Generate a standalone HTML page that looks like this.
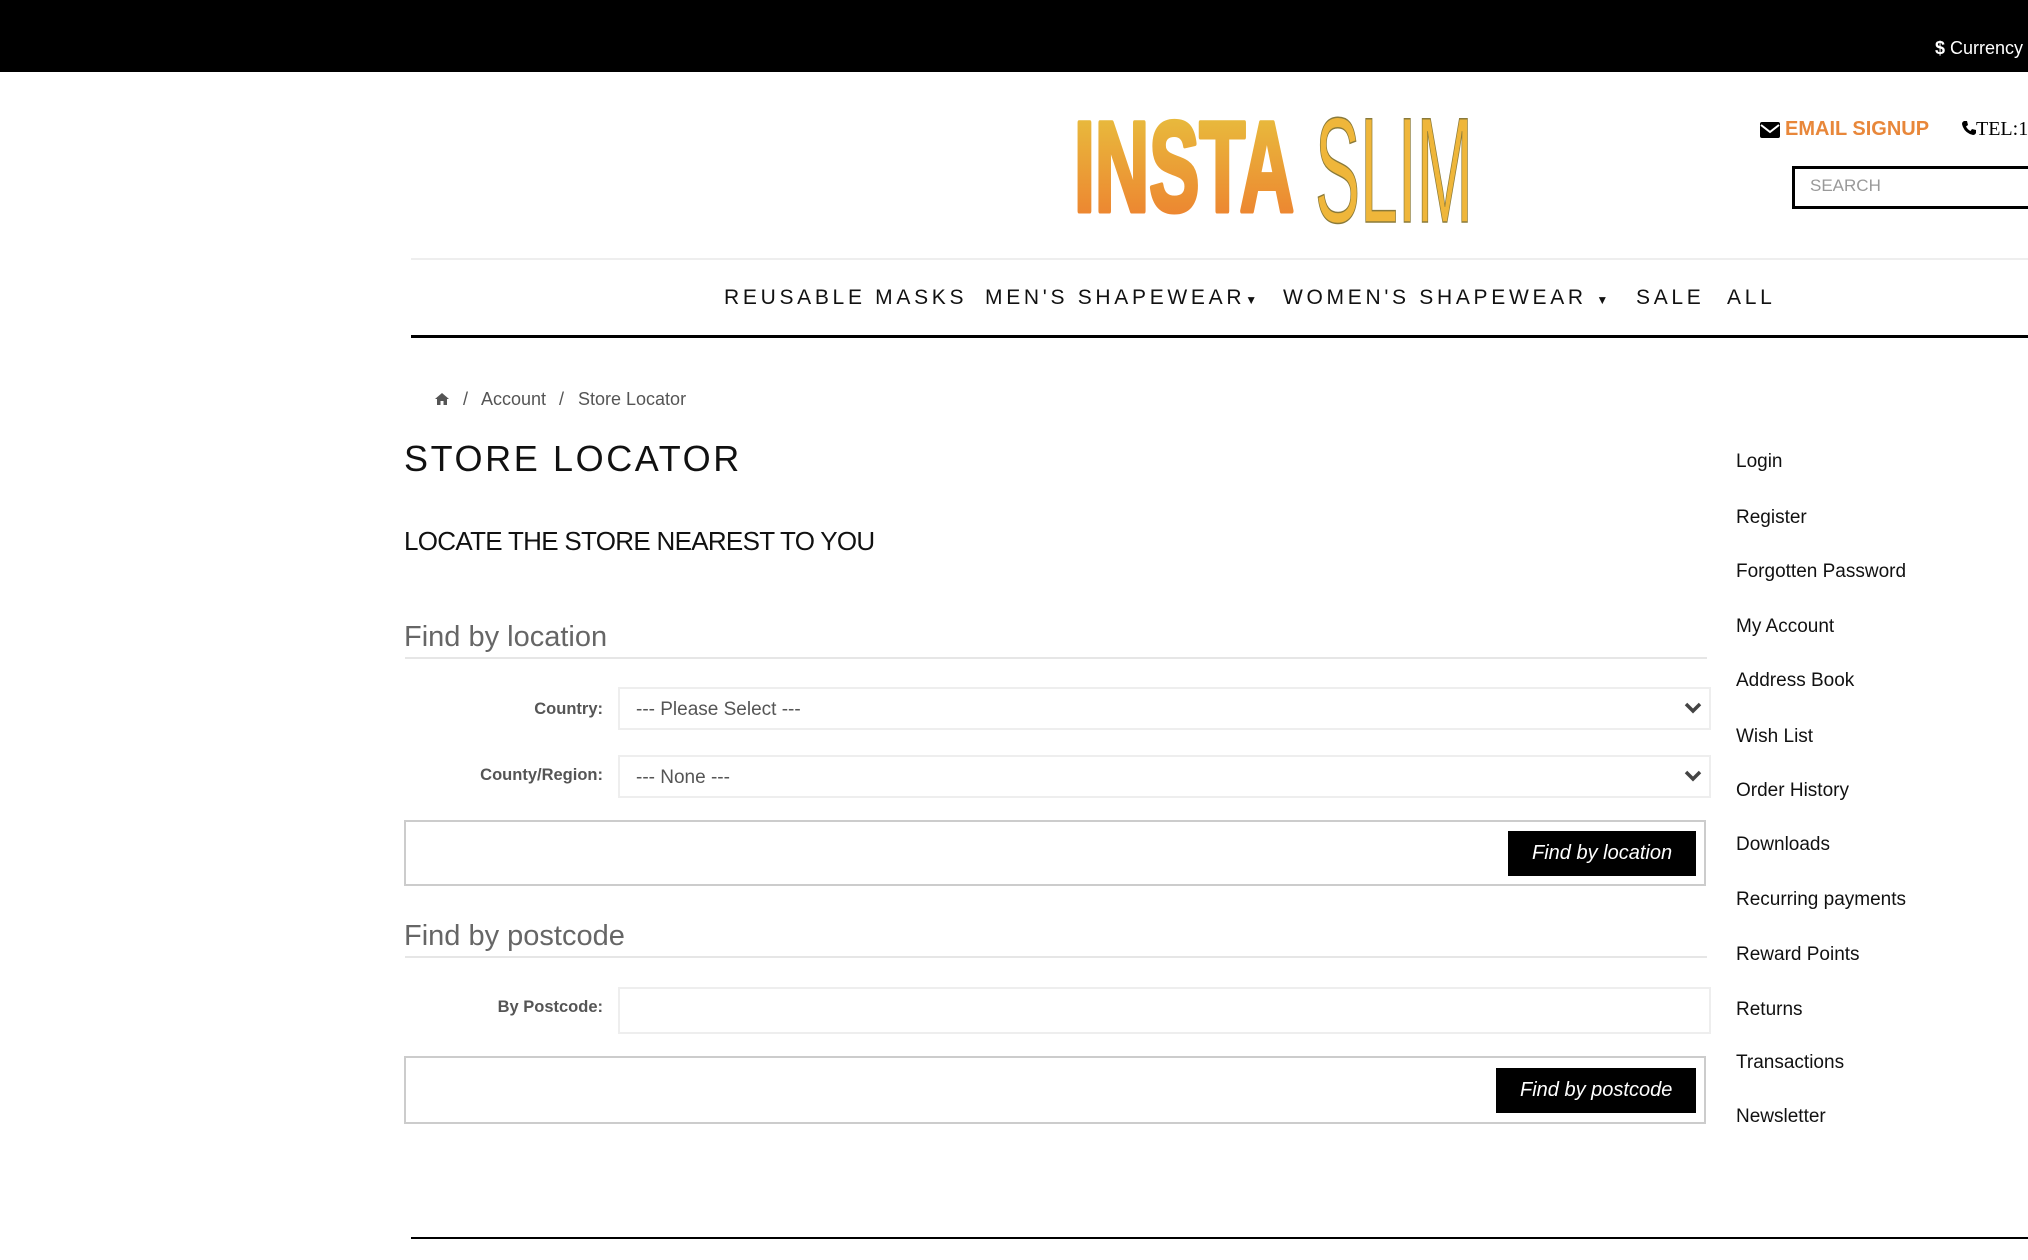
<!DOCTYPE html>
<html><head><meta charset="utf-8"><style>
*{margin:0;padding:0;box-sizing:border-box}
body{width:2028px;height:1260px;position:relative;background:#fff;font-family:"Liberation Sans",sans-serif;overflow:hidden;color:#111}
.a{position:absolute;white-space:nowrap}
.nav{top:286px;font-size:21px;letter-spacing:3.7px;color:#111}
.side{left:1736px;font-size:19px;color:#111}
.lbl{font-size:16.5px;font-weight:bold;color:#555;text-align:right;width:200px}
.sel{border:2px solid #eee;background:#fff;height:43px;font-size:19px;color:#555;padding:10px 16px}
.btnbox{border:2px solid #ccc;height:66px}
.btn{background:#000;color:#fff;font-style:italic;font-size:20px;padding:0 24px;height:45px;line-height:45px}
.hd{font-size:29px;color:#666}
.ln{height:2px;background:#e6e6e6}
</style></head><body>
<div class="a" style="left:0;top:0;width:2028px;height:72px;background:#000"></div>
<div class="a" style="left:1935px;top:38px;font-size:18px;color:#fff"><b>$</b> Currency</div>

<svg class="a" style="left:1068px;top:92px" width="420" height="140" viewBox="0 0 420 140">
<defs><linearGradient id="g" x1="0" y1="0" x2="0" y2="1"><stop offset="0" stop-color="#e7c53f"/><stop offset="1" stop-color="#ee7a2e"/></linearGradient></defs>
<text x="6" y="119" font-family="Liberation Sans Narrow, Liberation Sans, sans-serif" font-weight="bold" font-size="128" fill="url(#g)" stroke="url(#g)" stroke-width="5" stroke-linejoin="round" textLength="220" lengthAdjust="spacingAndGlyphs">INSTA</text>
<text x="247" y="130" font-family="Liberation Sans Narrow, Liberation Sans, sans-serif" font-size="150" fill="#efb63a" stroke="#8a7a3a" stroke-width="1.5" textLength="158" lengthAdjust="spacingAndGlyphs">SLIM</text>
</svg>

<svg class="a" style="left:1760px;top:122px" width="20" height="16" viewBox="0 0 20 16"><rect width="20" height="16" rx="2" fill="#000"/><path d="M1 3 L10 10 L19 3" stroke="#fff" stroke-width="2" fill="none"/></svg>
<div class="a" style="left:1785px;top:118px;font-size:20px;font-weight:bold;color:#e8873a">EMAIL SIGNUP</div>
<svg class="a" style="left:1961px;top:120px" width="16" height="16" viewBox="0 0 16 16"><path d="M3 1 L6 1 L7 5 L5 6.5 Q7 10 9.5 11 L11 9 L15 10 L15 13 Q14 15 12 15 Q3 13 1 4 Q1 2 3 1 Z" fill="#000"/></svg>
<div class="a" style="left:1976px;top:118px;font-size:20px;font-family:'Liberation Serif',serif;color:#000">TEL:1</div>
<div class="a" style="left:1792px;top:166px;width:260px;height:43px;border:3px solid #000"></div>
<div class="a" style="left:1810px;top:176px;font-size:17px;color:#999">SEARCH</div>

<div class="a" style="left:411px;top:258px;width:1617px;height:2px;background:#eee"></div>
<div class="a nav" style="left:724px">REUSABLE MASKS</div>
<div class="a nav" style="left:985px">MEN'S SHAPEWEAR<span style="font-size:12px;letter-spacing:0">&#9660;</span></div>
<div class="a nav" style="left:1283px">WOMEN'S SHAPEWEAR <span style="font-size:12px;letter-spacing:0">&#9660;</span></div>
<div class="a nav" style="left:1636px">SALE</div>
<div class="a nav" style="left:1727px">ALL</div>
<div class="a" style="left:411px;top:335px;width:1617px;height:3px;background:#000"></div>

<svg class="a" style="left:434px;top:392px" width="16" height="14" viewBox="0 0 16 14"><path d="M8 1 L1 7 L3 7 L3 13 L6.5 13 L6.5 9 L9.5 9 L9.5 13 L13 13 L13 7 L15 7 Z" fill="#555"/></svg>
<div class="a" style="left:463px;top:389px;font-size:18px;color:#555">/</div>
<div class="a" style="left:481px;top:389px;font-size:18px;color:#555">Account</div>
<div class="a" style="left:559px;top:389px;font-size:18px;color:#555">/</div>
<div class="a" style="left:578px;top:389px;font-size:18px;color:#555">Store Locator</div>

<div class="a" style="left:404px;top:438px;font-size:36px;letter-spacing:2.6px;color:#111">STORE LOCATOR</div>
<div class="a" style="left:404px;top:526px;font-size:26px;letter-spacing:-0.7px;color:#111">LOCATE THE STORE NEAREST TO YOU</div>

<div class="a hd" style="left:404px;top:621px">Find by location</div>
<div class="a ln" style="left:405px;top:657px;width:1302px"></div>
<div class="a lbl" style="left:403px;top:700px">Country:</div>
<div class="a sel" style="left:618px;top:687px;width:1093px">--- Please Select ---</div>
<div class="a lbl" style="left:403px;top:766px">County/Region:</div>
<div class="a sel" style="left:618px;top:755px;width:1093px">--- None ---</div>
<svg class="a" style="left:1684px;top:701px" width="18" height="14" viewBox="0 0 18 14"><path d="M2 3 L9 10 L16 3" stroke="#444" stroke-width="3.5" fill="none"/></svg>
<svg class="a" style="left:1684px;top:769px" width="18" height="14" viewBox="0 0 18 14"><path d="M2 3 L9 10 L16 3" stroke="#444" stroke-width="3.5" fill="none"/></svg>
<div class="a btnbox" style="left:404px;top:820px;width:1302px"></div>
<div class="a btn" style="left:1508px;top:831px">Find by location</div>

<div class="a hd" style="left:404px;top:920px">Find by postcode</div>
<div class="a ln" style="left:405px;top:956px;width:1302px"></div>
<div class="a lbl" style="left:403px;top:998px">By Postcode:</div>
<div class="a sel" style="left:618px;top:987px;width:1093px;height:47px"></div>
<div class="a btnbox" style="left:404px;top:1056px;width:1302px;height:68px"></div>
<div class="a btn" style="left:1496px;top:1068px">Find by postcode</div>

<div class="a side" style="top:451px">Login</div>
<div class="a side" style="top:507px">Register</div>
<div class="a side" style="top:561px">Forgotten Password</div>
<div class="a side" style="top:616px">My Account</div>
<div class="a side" style="top:670px">Address Book</div>
<div class="a side" style="top:726px">Wish List</div>
<div class="a side" style="top:780px">Order History</div>
<div class="a side" style="top:834px">Downloads</div>
<div class="a side" style="top:889px">Recurring payments</div>
<div class="a side" style="top:944px">Reward Points</div>
<div class="a side" style="top:999px">Returns</div>
<div class="a side" style="top:1052px">Transactions</div>
<div class="a side" style="top:1106px">Newsletter</div>

<div class="a" style="left:411px;top:1237px;width:1617px;height:2px;background:#000"></div>
</body></html>
